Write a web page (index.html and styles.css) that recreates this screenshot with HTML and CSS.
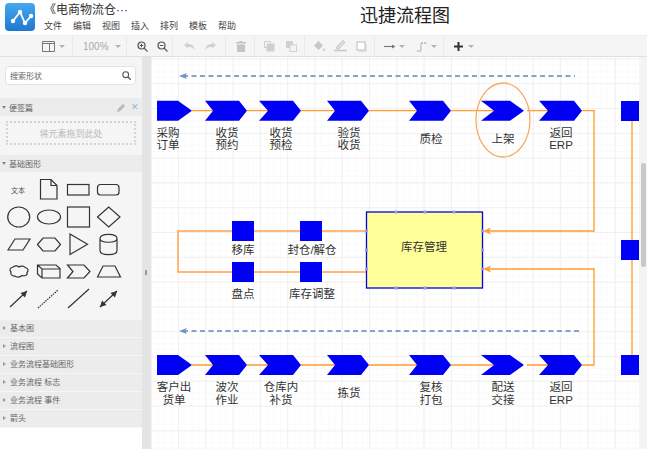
FILE: index.html
```html
<!DOCTYPE html>
<html lang="zh">
<head>
<meta charset="utf-8">
<title>迅捷流程图</title>
<link rel="stylesheet" href="styles.css">
</head>
<body>
<div class="app">
  <header class="topbar">
    <svg class="logo" viewBox="0 0 30 28" width="30" height="28">
      <defs><linearGradient id="lg" x1="0" y1="0" x2="0" y2="1"><stop offset="0" stop-color="#45a9ee"/><stop offset="1" stop-color="#1f78d0"/></linearGradient></defs>
      <rect width="30" height="28" rx="4" fill="url(#lg)"/>
      <path d="M8 18 L15 9 L20 20 L26 13" fill="none" stroke="#fff" stroke-width="1.8"/>
      <circle cx="8" cy="18" r="2.2" fill="#fff"/><circle cx="15" cy="9" r="2.2" fill="#fff"/><circle cx="20" cy="20" r="2.2" fill="#fff"/><circle cx="26" cy="13" r="2.2" fill="#fff"/>
    </svg>
    <div class="docinfo">
      <div class="doctitle">《电商物流仓···</div>
      <nav class="menu"><span>文件</span><span>编辑</span><span>视图</span><span>插入</span><span>排列</span><span>模板</span><span>帮助</span></nav>
    </div>
    <div class="apptitle">迅捷流程图</div>
  </header>

  <div class="toolbar">
    <div class="tg tg-panel">
      <svg width="13" height="11" viewBox="0 0 13 11"><path d="M.5.5h12v10H.5zM.5 2.5h12M7.5 2.5v8" fill="none" stroke="#777"/></svg>
      <i class="caret"></i>
    </div>
    <div class="tg tg-zoom"><span class="pct">100%</span><i class="caret"></i></div>
    <div class="tg tg-mag">
      <svg width="11" height="11" viewBox="0 0 11 11"><circle cx="4.5" cy="4.5" r="3.5" fill="none" stroke="#555" stroke-width="1.2"/><path d="M7 7l3.5 3.5M2.8 4.5h3.4M4.5 2.8v3.4" stroke="#555" stroke-width="1.1"/></svg>
      <svg width="11" height="11" viewBox="0 0 11 11"><circle cx="4.5" cy="4.5" r="3.5" fill="none" stroke="#555" stroke-width="1.2"/><path d="M7 7l3.5 3.5M2.8 4.5h3.4" stroke="#555" stroke-width="1.1"/></svg>
    </div>
    <div class="tg tg-undo">
      <svg width="11" height="8" viewBox="0 0 11 8"><path d="M0 3l4-3v2c4 0 6 2 7 6-2-2.500-4-3-7-3v1.500z" fill="#d0d0d0"/></svg>
      <svg width="11" height="8" viewBox="0 0 11 8"><path d="M11 3L7 0v2C3 2 1 4 0 8c2-2.500 4-3 7-3v1.500z" fill="#d0d0d0"/></svg>
    </div>
    <div class="tg tg-del">
      <svg width="10" height="11" viewBox="0 0 10 11"><path d="M0 1h3.500V0h3v1H10v1.500H0zM1 3.500h8V11H1z" fill="#c4c4c4"/></svg>
    </div>
    <div class="tg tg-order">
      <svg width="11" height="11" viewBox="0 0 11 11"><rect x=".5" y=".5" width="6" height="6" fill="none" stroke="#d0d0d0"/><rect x="3" y="3" width="7" height="7" fill="#d0d0d0" stroke="#d0d0d0"/></svg>
      <svg width="11" height="11" viewBox="0 0 11 11"><rect x=".5" y=".5" width="6" height="6" fill="#d0d0d0" stroke="#d0d0d0"/><rect x="4" y="4" width="6.500" height="6.500" fill="#f5f5f5" stroke="#d0d0d0"/></svg>
    </div>
    <div class="tg tg-style">
      <svg width="12" height="12" viewBox="0 0 12 12"><path d="M5.500 1L10 5.500 5.500 10 1 5.500zM11 8c.7 1 1 1.500 1 2a1 1 0 0 1-2 0c0-.5.3-1 1-2z" fill="#c8c8c8"/></svg>
      <svg width="13" height="12" viewBox="0 0 13 12"><path d="M3 7l6-6 1.500 1.500-6 6H3zM0 10.500h13" fill="none" stroke="#c8c8c8" stroke-width="1.300"/></svg>
      <svg width="11" height="11" viewBox="0 0 11 11"><rect x="1" y="1" width="8" height="8" fill="#fff" stroke="#c8c8c8" stroke-width="1.300"/><path d="M3 10.500h7.500V3" fill="none" stroke="#dedede"/></svg>
    </div>
    <div class="tg tg-line">
      <svg width="12" height="7" viewBox="0 0 12 7"><path d="M0 3.500h8" stroke="#777" stroke-width="1.100"/><path d="M8 1.500l3.500 2-3.500 2z" fill="#777"/></svg>
      <i class="caret"></i>
      <svg class="wp" width="12" height="11" viewBox="0 0 12 11"><path d="M1 10h4V2h6" fill="none" stroke="#888" stroke-dasharray="1.500 1"/></svg>
      <i class="caret"></i>
    </div>
    <div class="tg tg-add">
      <svg width="11" height="11" viewBox="0 0 11 11"><path d="M5.500 1v9M1 5.500h9" stroke="#333" stroke-width="2"/></svg>
      <i class="caret"></i>
    </div>
  </div>

  <div class="main">
    <aside class="sidebar">
      <div class="searchwrap">
        <div class="search"><span>搜索形状</span>
          <svg width="9" height="9" viewBox="0 0 9 9"><circle cx="3.700" cy="3.700" r="2.900" fill="none" stroke="#555" stroke-width="1.100"/><path d="M6 6l2.700 2.700" stroke="#555" stroke-width="1.300"/></svg>
        </div>
      </div>
      <div class="sechead"><i class="down"></i><span>便签篇</span>
        <svg class="pencil" width="9" height="9" viewBox="0 0 9 9"><path d="M0 9l.8-3L6 .8 8.200 3 3 8.200z" fill="#bbb"/></svg>
        <span class="close">✕</span>
      </div>
      <div class="dropwrap"><div class="drop">将元素拖到此处</div></div>
      <div class="sechead"><i class="down"></i><span>基础图形</span></div>
      <svg class="palette" viewBox="0 172 142 148" width="142" height="148">
        <text class="pal-text" x="18" y="192.500">文本</text>
        <g class="pal">
          <path d="M40.500 179.500H51l6 6V199H40.500zM51 179.500V185.500H57"/>
          <rect x="67.500" y="184.500" width="21.500" height="10.500"/>
          <rect x="97.500" y="184.500" width="21.500" height="10.500" rx="3"/>
          <ellipse cx="18.700" cy="217" rx="11" ry="10"/>
          <ellipse cx="49" cy="217" rx="11.500" ry="7"/>
          <rect x="67.500" y="207" width="22" height="20"/>
          <path d="M97.500 217L108.700 207 120 217 108.700 227z"/>
          <path d="M8 250L15 239H30L23 250z"/>
          <path d="M37.500 244.500L43 238H55L60.500 244.500 55 251H43z"/>
          <path d="M70 234L87.500 244.300 70 254.500z"/>
          <path d="M100 238.500c0-5.500 17-5.500 17 0v12c0 5.500-17 5.500-17 0zM100 238.500c0 5 17 5 17 0"/>
          <path d="M13 267c3-2 5-1 6 0 2-1.500 5-1 6 .5 3 .5 4 3 2 5 1 3-3 4-5 3-2 2-6 2-7 .5-3 .5-5-2-4-4-2-2-1-4 2-5z"/>
          <path d="M37.500 265H56l4 3.500V278H42l-4.500-4zM37.500 265L42 269H60M42 269V278"/>
          <path d="M67.500 265H84l6 6.500-6 6.500H67.500l5.500-6.500z"/>
          <path d="M97.500 277L103 266H115L120.500 277z"/>
          <path d="M10 307L27 291"/>
          <path class="dotted" d="M38 308L58 290"/>
          <path d="M68 308L89 289"/>
          <path d="M100 307L117 291"/>
        </g>
        <path class="pal-head" d="M27 291l-6.500 2 4.500 4.500zM117 291l-6.500 2 4.500 4.500zM100 307l6.500-2-4.500-4.500z"/>
      </svg>
      <ul class="sections">
        <li>基本图</li>
        <li>流程图</li>
        <li>业务流程基础图形</li>
        <li>业务流程 标志</li>
        <li>业务流程 事件</li>
        <li>箭头</li>
      </ul>
    </aside>
    <div class="gutter"><i class="handle"></i></div>
    <div class="canvas">
      <svg class="diagram" viewBox="151 57 488 392" width="488" height="392">
        <g class="dash">
          <path d="M183 76H575"/>
          <path d="M183 331H581"/>
        </g>
        <path class="dashhead" d="M179 76l8-3-2 3 2 3zM179 331l8-3-2 3 2 3z"/>

        <g class="flow">
          <path d="M192 110.700H213M247 110.700H268M301 110.700H335M369 110.700H417M451 110.700H494M527 110.700H548M582 110.700H594V231H488"/>
          <path d="M192 365H213M247 365H268M301 365H335M369 365H417M451 365H494M527 365H548M582 365H594V269H488"/>
          <path d="M632 110V365"/>
        </g>
        <g class="flow2">
          <path d="M366 231H178V272H366"/>
        </g>
        <path class="head" d="M483 231l8-3.500-2 3.500 2 3.500zM483 269l8-3.500-2 3.500 2 3.500z"/>

        <g class="node">
          <path d="M157 100.700H178L192 110.700 178 120.700H157z"/>
          <path d="M205 100.700H239L247 110.700 239 120.700H205L213 110.700z"/>
          <path d="M259 100.700H293L301 110.700 293 120.700H259L268 110.700z"/>
          <path d="M327 100.700H361L369 110.700 361 120.700H327L335 110.700z"/>
          <path d="M409 100.700H443L451 110.700 443 120.700H409L417 110.700z"/>
          <path d="M481 100.700H510L524 110.700 510 120.700H481L494 110.700z"/>
          <path d="M539 100.700H574L582 110.700 574 120.700H539L548 110.700z"/>
          <path d="M157 355H178L192 365 178 375H157z"/>
          <path d="M205 355H239L247 365 239 375H205L213 365z"/>
          <path d="M259 355H293L301 365 293 375H259L268 365z"/>
          <path d="M327 355H361L369 365 361 375H327L335 365z"/>
          <path d="M409 355H443L451 365 443 375H409L417 365z"/>
          <path d="M481 355H510L524 365 510 375H481L494 365z"/>
          <path d="M539 355H574L582 365 574 375H539L548 365z"/>
          <rect x="621" y="101" width="18" height="20"/>
          <rect x="621" y="240" width="18" height="20"/>
          <rect x="621" y="355" width="18" height="20"/>
          <rect x="232" y="221" width="22" height="20"/>
          <rect x="300" y="221" width="22" height="20"/>
          <rect x="232" y="262" width="22" height="20"/>
          <rect x="300" y="262" width="22" height="20"/>
        </g>
        <ellipse class="ring" cx="503" cy="120" rx="27" ry="37"/>
        <rect class="store" x="366.500" y="212" width="116" height="76"/>
        <g class="port">
          <rect x="394.500" y="210.500" width="3" height="3"/><rect x="423.500" y="210.500" width="3" height="3"/><rect x="452.500" y="210.500" width="3" height="3"/>
          <rect x="394.500" y="286.500" width="3" height="3"/><rect x="423.500" y="286.500" width="3" height="3"/><rect x="452.500" y="286.500" width="3" height="3"/>
          <rect x="365" y="229.500" width="3" height="3"/><rect x="365" y="248.500" width="3" height="3"/><rect x="365" y="267.500" width="3" height="3"/>
          <rect x="481" y="229.500" width="3" height="3"/><rect x="481" y="248.500" width="3" height="3"/><rect x="481" y="267.500" width="3" height="3"/>
        </g>
        <g class="label">
          <text x="168" y="137">采购</text><text x="168" y="149">订单</text>
          <text x="227" y="137">收货</text><text x="227" y="149">预约</text>
          <text x="281" y="137">收货</text><text x="281" y="149">预检</text>
          <text x="349" y="137">验货</text><text x="349" y="149">收货</text>
          <text x="431" y="143">质检</text>
          <text x="503" y="143">上架</text>
          <text x="561" y="137">返回</text><text x="561" y="149">ERP</text>
          <text x="243" y="254">移库</text>
          <text x="312" y="254">封仓/解仓</text>
          <text x="424" y="251">库存管理</text>
          <text x="243" y="298">盘点</text>
          <text x="312" y="298">库存调整</text>
          <text x="174" y="391">客户出</text><text x="174" y="404">货单</text>
          <text x="227" y="391">波次</text><text x="227" y="404">作业</text>
          <text x="281" y="391">仓库内</text><text x="281" y="404">补货</text>
          <text x="349" y="397">拣货</text>
          <text x="431" y="391">复核</text><text x="431" y="404">打包</text>
          <text x="503" y="391">配送</text><text x="503" y="404">交接</text>
          <text x="561" y="391">返回</text><text x="561" y="404">ERP</text>
        </g>
      </svg>
    </div>
    <div class="scrollbar"><i class="thumb"></i></div>
  </div>
</div>
</body>
</html>
```

FILE: styles.css
```css
* { box-sizing: border-box; }
html, body { margin: 0; height: 100%; overflow: hidden; background: #fff; }
body { font-family: "Liberation Sans", "Noto Sans CJK SC", sans-serif; color: #333; }
.app { width: 647px; height: 449px; display: flex; flex-direction: column; }

.topbar { height: 35px; display: flex; align-items: flex-start; background: #fff; flex: none; }
.logo { margin: 3px 0 0 5px; flex: none; }
.docinfo { margin-left: 9px; width: 230px; flex: none; }
.doctitle { font-size: 12px; line-height: 14px; margin-top: 3px; color: #333; }
.menu { display: flex; gap: 11px; font-size: 9px; line-height: 12px; margin-top: 3px; color: #444; }
.apptitle { margin-left: 86px; font-size: 18px; line-height: 24px; margin-top: 4px; color: #222; }

.toolbar { height: 22px; flex: none; display: flex; background: #f5f5f5; border-top: 1px solid #eee; border-bottom: 1px solid #e0e0e0; }
.tg { display: flex; align-items: center; height: 100%; border-right: 1px solid #e9e9e9; flex: none; }
.caret { width: 0; height: 0; border-left: 3px solid transparent; border-right: 3px solid transparent; border-top: 3px solid #b4b4b4; flex: none; }
.tg-panel { width: 73px; padding-left: 42px; gap: 4px; }
.tg-zoom { width: 54px; padding-left: 10px; gap: 6px; }
.pct { font-size: 10px; color: #a8a8a8; }
.tg-mag { width: 46px; padding-left: 10px; gap: 9px; }
.tg-undo { width: 53px; padding-left: 11px; gap: 10px; }
.tg-del { width: 29px; padding-left: 10px; }
.tg-order { width: 50px; padding-left: 9px; gap: 11px; }
.tg-style { width: 70px; padding-left: 8px; gap: 9px; }
.tg-line { width: 69px; padding-left: 9px; gap: 3px; }
.tg-line .wp { margin-left: 8px; }
.tg-add { border-right: 0; padding-left: 9px; gap: 4px; flex: 1; }

.main { flex: 1; min-height: 0; display: flex; }
.sidebar { width: 142px; flex: none; background: #fff; display: flex; flex-direction: column; }
.searchwrap { height: 41px; padding: 9px 6px 0 5px; background: #f5f5f5; flex: none; }
.search { height: 19px; background: #fff; border: 1px solid #e2e2e2; border-radius: 4px; display: flex; align-items: center; justify-content: space-between; padding: 0 4px 0 4px; font-size: 8px; color: #666; }
.sechead { height: 18px; background: #ececec; display: flex; align-items: center; padding-left: 2px; gap: 3px; font-size: 8px; color: #666; flex: none; }
.sechead + .dropwrap + .sechead { height: 17px; }
.down { width: 0; height: 0; border-left: 2.500px solid transparent; border-right: 2.500px solid transparent; border-top: 3px solid #888; }
.pencil { margin-left: auto; }
.close { color: #8fb4dc; font-size: 9px; margin: 0 3px 0 2px; }
.dropwrap { height: 39px; padding: 5px 6px 10px 6px; background: #f5f5f5; flex: none; }
.drop { height: 24px; border: 2px dotted #d4d4d4; border-radius: 2px; font-size: 9px; color: #bbb; display: flex; align-items: center; justify-content: center; }
.palette { display: block; background: #f5f5f5; flex: none; }
.pal { fill: none; stroke: #333; stroke-width: 1.200; }
.pal .dotted { stroke-dasharray: 1.500 1; }
.pal-head { fill: #333; }
.pal-text { font-size: 7px; text-anchor: middle; fill: #555; }
.sections { list-style: none; margin: 0; padding: 0; flex: none; }
.sections li { height: 18px; background: #ececec; border-bottom: 1px solid #f6f6f6; font-size: 8px; line-height: 17px; padding-left: 10px; color: #666; position: relative; }
.sections li::before { content: ""; position: absolute; left: 3px; top: 6px; border-top: 2.500px solid transparent; border-bottom: 2.500px solid transparent; border-left: 3px solid #999; }

.gutter { width: 9px; flex: none; background: #e4e4e4; position: relative; }
.handle { position: absolute; left: 3px; top: 213px; width: 2px; height: 5px; background: #999; }
.canvas {
  width: 488px; flex: none; background-color: #fff; overflow: hidden;
  background-image:
    linear-gradient(to right, #f0f0f0 1px, transparent 1px),
    linear-gradient(to bottom, #f0f0f0 1px, transparent 1px),
    linear-gradient(to right, #fafafa 1px, transparent 1px),
    linear-gradient(to bottom, #fafafa 1px, transparent 1px);
  background-size: 27.300px 24.800px, 27.300px 24.800px, 6.825px 6.200px, 6.825px 6.200px;
  background-position: 27px 1.500px, 27px 1.500px, 27px 1.500px, 27px 1.500px;
}
.diagram { display: block; }
.dash { fill: none; stroke: #5f86c0; stroke-width: 1.300; stroke-dasharray: 5 3.500; }
.dashhead { fill: #6f92c6; }
.flow { fill: none; stroke: #ff9a2e; stroke-width: 1.300; }
.flow2 { fill: none; stroke: #ffa14f; stroke-width: 1.500; }
.head { fill: #ff9a3a; }
.node { fill: #0000f5; }
.ring { fill: none; stroke: #f7ab66; stroke-width: 1.300; }
.store { fill: #ffff99; stroke: #0000e6; stroke-width: 1.300; }
.port { fill: #9a9af0; }
.label { font-size: 11.500px; text-anchor: middle; fill: #333; }
.scrollbar { flex: 1; background: #f4f4f4; position: relative; }
.thumb { position: absolute; left: 2px; top: 106px; width: 5px; height: 104px; background: #c8c8c8; border-radius: 2px; }
```
